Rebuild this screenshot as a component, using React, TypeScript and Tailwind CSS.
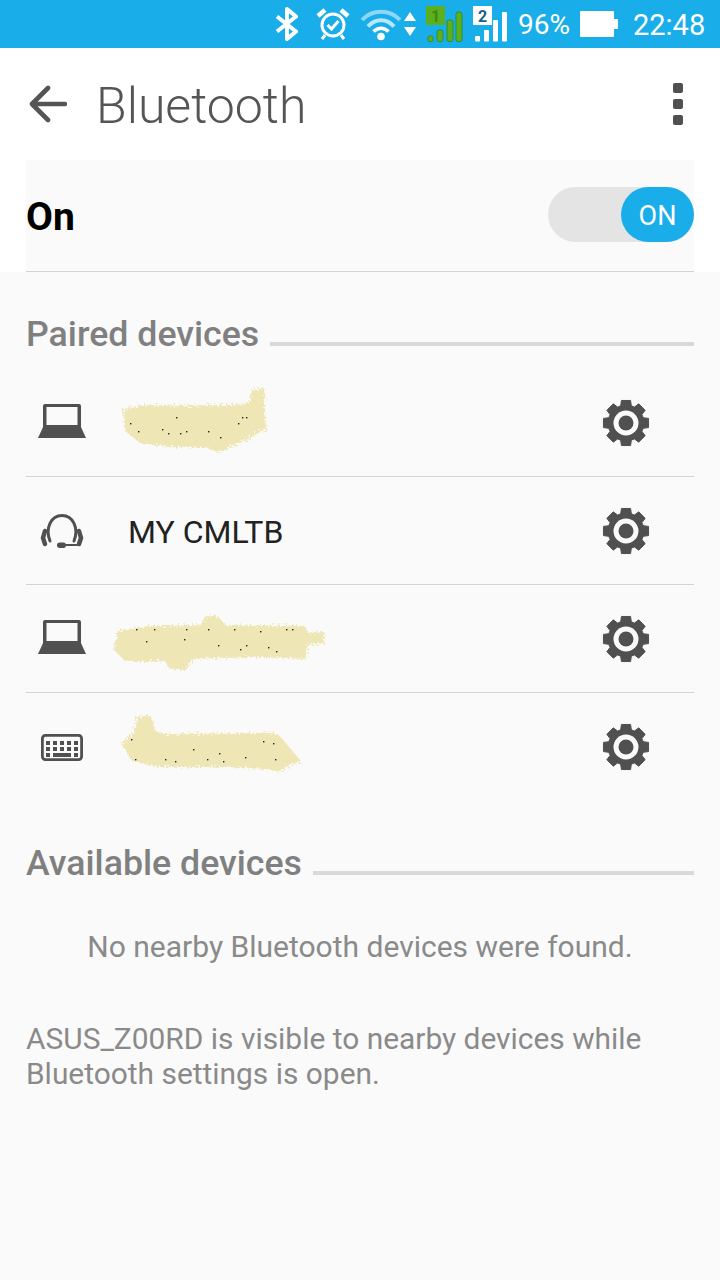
const gearPath = (() => {
  const teeth = 8
  const outer = 23
  const root = 18
  let d = ''
  for (let i = 0; i < teeth; i++) {
    const a = (i * Math.PI * 2) / teeth - Math.PI / 2
    const pts: [number, number][] = [
      [root, a - 0.3],
      [outer, a - 0.2],
      [outer, a + 0.2],
      [root, a + 0.3],
    ]
    for (const [r, t] of pts) {
      d += `${d ? 'L' : 'M'}${(24 + r * Math.cos(t)).toFixed(2)} ${(24 + r * Math.sin(t)).toFixed(2)}`
    }
  }
  return d + 'Z'
})()

function Gear() {
  return (
    <svg width="48" height="48" viewBox="0 0 48 48" className="shrink-0">
      <path d={gearPath} fill="#505050" stroke="#505050" strokeWidth="1" strokeLinejoin="round" />
      <circle cx="24" cy="24" r="12.5" fill="#fafafa" />
      <circle cx="24" cy="24" r="7.5" fill="#505050" />
    </svg>
  )
}

function Laptop() {
  return (
    <svg width="48" height="34" viewBox="0 0 48 34" className="mb-1">
      <path fill="#505050" d="M5 2a2 2 0 0 1 2-2h34a2 2 0 0 1 2 2V23H5Z" />
      <rect x="8.5" y="3" width="31" height="18" fill="#fafafa" />
      <path fill="#505050" d="M5.5 22h37L48 34H0Z" />
    </svg>
  )
}

function Headset() {
  return (
    <svg width="44" height="36" viewBox="0 0 44 36" fill="none" stroke="#505050">
      <path d="M10 28C5 15 11 2.5 22 2.5S39 15 34 28" strokeWidth="3" strokeLinecap="round" />
      <path d="M5 18 3 25 5 31" strokeWidth="4.5" strokeLinecap="round" />
      <path d="M39 18 41 25 39 31" strokeWidth="4.5" strokeLinecap="round" />
      <path d="M21 32h15c3 0 4-1 4-3" strokeWidth="2" strokeLinecap="round" />
      <rect x="17" y="29.5" width="9" height="5.5" rx="2.7" fill="#505050" stroke="none" />
    </svg>
  )
}

function Keyboard() {
  const keys: [number, number][] = []
  for (const y of [7, 13]) for (const x of [5, 12, 19, 26, 33]) keys.push([x, y])
  return (
    <svg width="42" height="27" viewBox="0 0 42 27">
      <rect x="1.4" y="1.4" width="39.2" height="24.2" rx="3" fill="none" stroke="#505050" strokeWidth="2.8" />
      {keys.map(([x, y]) => (
        <rect key={`${x}-${y}`} x={x} y={y} width="4" height="4" fill="#505050" />
      ))}
      <rect x="5" y="19" width="4" height="4" fill="#505050" />
      <rect x="12" y="19" width="18" height="4" fill="#505050" />
      <rect x="33" y="19" width="4" height="4" fill="#505050" />
    </svg>
  )
}

function Scribble({ id, w, h, d, specks }: { id: string; w: number; h: number; d: string; specks: [number, number][] }) {
  return (
    <svg width={w} height={h} viewBox={`0 0 ${w} ${h}`} className="overflow-visible">
      <filter id={id} x="-10%" y="-20%" width="120%" height="140%">
        <feTurbulence type="fractalNoise" baseFrequency="0.5" numOctaves="2" seed="4" />
        <feDisplacementMap in="SourceGraphic" scale="10" />
      </filter>
      <path d={d} fill="#efe6b6" filter={`url(#${id})`} />
      {specks.map(([x, y]) => (
        <rect key={`${x}-${y}`} x={x} y={y} width="1.4" height="1.4" fill="#222" />
      ))}
    </svg>
  )
}

function Row({ icon, children, last }: { icon: React.ReactNode; children: React.ReactNode; last?: boolean }) {
  return (
    <div className={`flex h-[108px] items-center pr-[44px] ${last ? '' : 'border-b border-[#d4d4d4]'}`}>
      <div className="flex w-[72px] shrink-0 justify-center">{icon}</div>
      <div className="flex min-w-0 flex-1 items-center">{children}</div>
      <Gear />
    </div>
  )
}

function Heading({ label }: { label: string }) {
  return (
    <div className="flex items-end gap-[11px]">
      <div className="h-8 text-[35.7px] leading-8 font-medium whitespace-nowrap text-[#808080]">{label}</div>
      <div className="mb-1 h-1 flex-1 bg-[#d9d9d9]" />
    </div>
  )
}

export default function App() {
  return (
    <div className="flex min-h-[1280px] flex-col bg-[#fafafa] font-['Roboto',sans-serif]">
      {/* status bar */}
      <div className="flex h-12 items-center bg-[#19aee9] pl-[275px] text-white">
        <svg width="24" height="34" viewBox="0 0 24 34" fill="none" stroke="#fff" strokeWidth="4" strokeLinejoin="round">
          <path d="M2 9.5 21 24.5 12 32V2L21 9.5 2 24.5" />
        </svg>
        <svg width="34" height="34" viewBox="0 0 34 34" fill="none" stroke="#fff" className="ml-[17px]">
          <circle cx="17" cy="18" r="11" strokeWidth="3" />
          <path d="M11.5 18 15.5 22 22.5 14" strokeWidth="3" />
          <path d="M2 9 9 3M32 9 25 3" strokeWidth="4.5" />
          <path d="M9 28 6 32M25 28 28 32" strokeWidth="3" />
        </svg>
        <svg width="40" height="33" viewBox="0 0 40 33" fill="none" className="ml-[11px]">
          <path d="M1 12C11 1 29 1 39 12" stroke="#8dd6f4" strokeWidth="4" />
          <path d="M7 18.5C14 10 26 10 33 18.5" stroke="#b9e6f8" strokeWidth="4" />
          <path d="M12.5 23.5C17 19 23 19 27.5 23.5" stroke="#fff" strokeWidth="3.5" />
          <circle cx="20" cy="28.5" r="3.8" fill="#fff" />
        </svg>
        <svg width="12" height="24" viewBox="0 0 12 24" fill="#fff" className="ml-[3px]">
          <path d="M6 0 12 9H0ZM6 24 0 15H12Z" />
        </svg>
        <svg width="37" height="36" viewBox="0 0 37 36" className="ml-[10px]">
          <rect x="0" y="0" width="19" height="19" fill="#5cb01f" />
          <text x="9.5" y="15.5" fontSize="16" fontWeight="700" textAnchor="middle" fill="#3d8a10">1</text>
          <g fill="#5cb01f" stroke="#2f8f2f" strokeWidth="1">
            <rect x="2" y="30" width="5" height="5.5" rx="1.5" />
            <rect x="11" y="24" width="6" height="11.5" rx="2" />
            <rect x="21" y="14" width="6" height="21.5" rx="2" />
            <rect x="30" y="6" width="6" height="29.5" rx="2" />
          </g>
        </svg>
        <svg width="37" height="36" viewBox="0 0 37 36" className="ml-[10px]">
          <rect x="0" y="0" width="19" height="19" fill="#fff" />
          <text x="9.5" y="15.5" fontSize="16" fontWeight="700" textAnchor="middle" fill="#1c5f86">2</text>
          <g fill="#fff">
            <rect x="2" y="30" width="5" height="5.5" rx="1" />
            <rect x="11" y="24" width="5" height="11.5" rx="1" />
            <rect x="20" y="14" width="5" height="21.5" rx="1" />
            <rect x="29" y="6" width="5" height="29.5" rx="1" />
          </g>
        </svg>
        <div className="ml-2 w-[53px] pt-[2px] text-[28px] leading-8 whitespace-nowrap">96%</div>
        <div className="ml-[9px] flex items-center">
          <div className="h-[26px] w-[34px] rounded-[1px] bg-white" />
          <div className="h-[10px] w-1 bg-white" />
        </div>
        <div className="ml-[15px] pt-[2px] text-[29px] leading-8 whitespace-nowrap">22:48</div>
      </div>

      {/* title bar + switch */}
      <div className="bg-white">
        <div className="flex h-[112px] items-center pr-[37px] pl-[29px]">
          <svg width="38" height="38" viewBox="0 0 38 38" fill="none" stroke="#555" strokeWidth="4.6" strokeLinecap="round" strokeLinejoin="round">
            <path d="M36 19H3M19 3 3 19 19 35" />
          </svg>
          <div className="ml-[29px] flex-1 pt-1 text-[50px] leading-[56px] font-light text-[#555]">Bluetooth</div>
          <div className="flex flex-col gap-[6px]">
            <div className="size-[10px] rounded-[2px] bg-[#505050]" />
            <div className="size-[10px] rounded-[2px] bg-[#505050]" />
            <div className="size-[10px] rounded-[2px] bg-[#505050]" />
          </div>
        </div>
        <div className="mx-[26px] flex h-[112px] items-center justify-between border-b border-[#d4d4d4] bg-[#fafafa] pb-[2px]">
          <div className="pt-[5px] text-[39px] leading-10 font-bold text-black">On</div>
          <div className="flex h-[55px] w-[146px] justify-end rounded-full bg-[#e4e4e4]">
            <div className="flex h-[55px] w-[73px] items-center justify-center rounded-full bg-[#19aee9] pt-[3px] text-[27px] text-white">ON</div>
          </div>
        </div>
      </div>

      <div className="px-[26px]">
        <div className="pt-[46px] pb-[19px]">
          <Heading label="Paired devices" />
        </div>
        <Row icon={<Laptop />}>
          <div className="mb-[5px] ml-[22px]">
            <Scribble
              id="s1"
              w={145}
              h={66}
              d="M3 22Q30 16 60 19L100 18Q125 18 130 14L132 3 144 1 146 42 128 52 110 60 100 66 85 60 50 60 20 56 5 44Z"
              specks={[[10, 36], [42, 42], [48, 46], [60, 46], [66, 44], [88, 44], [100, 50], [118, 36], [122, 30], [126, 30], [18, 44], [56, 30]]}
            />
          </div>
        </Row>
        <Row icon={<Headset />}>
          <div className="ml-[30px] pt-[2px] text-[32px] leading-9 text-[#222]">MY CMLTB</div>
        </Row>
        <Row icon={<Laptop />}>
          <div className="mt-2 ml-3">
            <Scribble
              id="s2"
              w={216}
              h={56}
              d="M8 16 40 11 90 10 97 1 108 1 115 10 195 11 198 18 214 17 214 28 198 30 196 44 150 42 82 44 76 55 60 55 55 46 15 46 3 34Z"
              specks={[[26, 14], [44, 14], [76, 14], [98, 14], [124, 14], [150, 16], [176, 14], [182, 14], [36, 26], [74, 24], [108, 30], [130, 34], [136, 30], [158, 32], [166, 36]]}
            />
          </div>
        </Row>
        <Row last icon={<Keyboard />}>
          <div className="mb-2 ml-[19px]">
            <Scribble
              id="s3"
              w={184}
              h={60}
              d="M4 30 16 20 20 4 34 2 38 18 48 21 130 20 160 20 172 34 184 48 170 54 162 59 150 56 110 54 40 54 15 48Z"
              specks={[[14, 26], [18, 46], [48, 46], [58, 48], [76, 36], [90, 46], [102, 40], [106, 48], [128, 44], [146, 28], [156, 30], [158, 46]]}
            />
          </div>
        </Row>
        <div className="pt-[46px]">
          <Heading label="Available devices" />
        </div>
        <div className="mt-12 text-center text-[30px] leading-10 text-[#8a8a8a]">No nearby Bluetooth devices were found.</div>
        <div className="mt-[54px] text-[29.9px] leading-[35px] text-[#8a8a8a]">
          ASUS_Z00RD is visible to nearby devices while
          <br />
          Bluetooth settings is open.
        </div>
      </div>
    </div>
  )
}
